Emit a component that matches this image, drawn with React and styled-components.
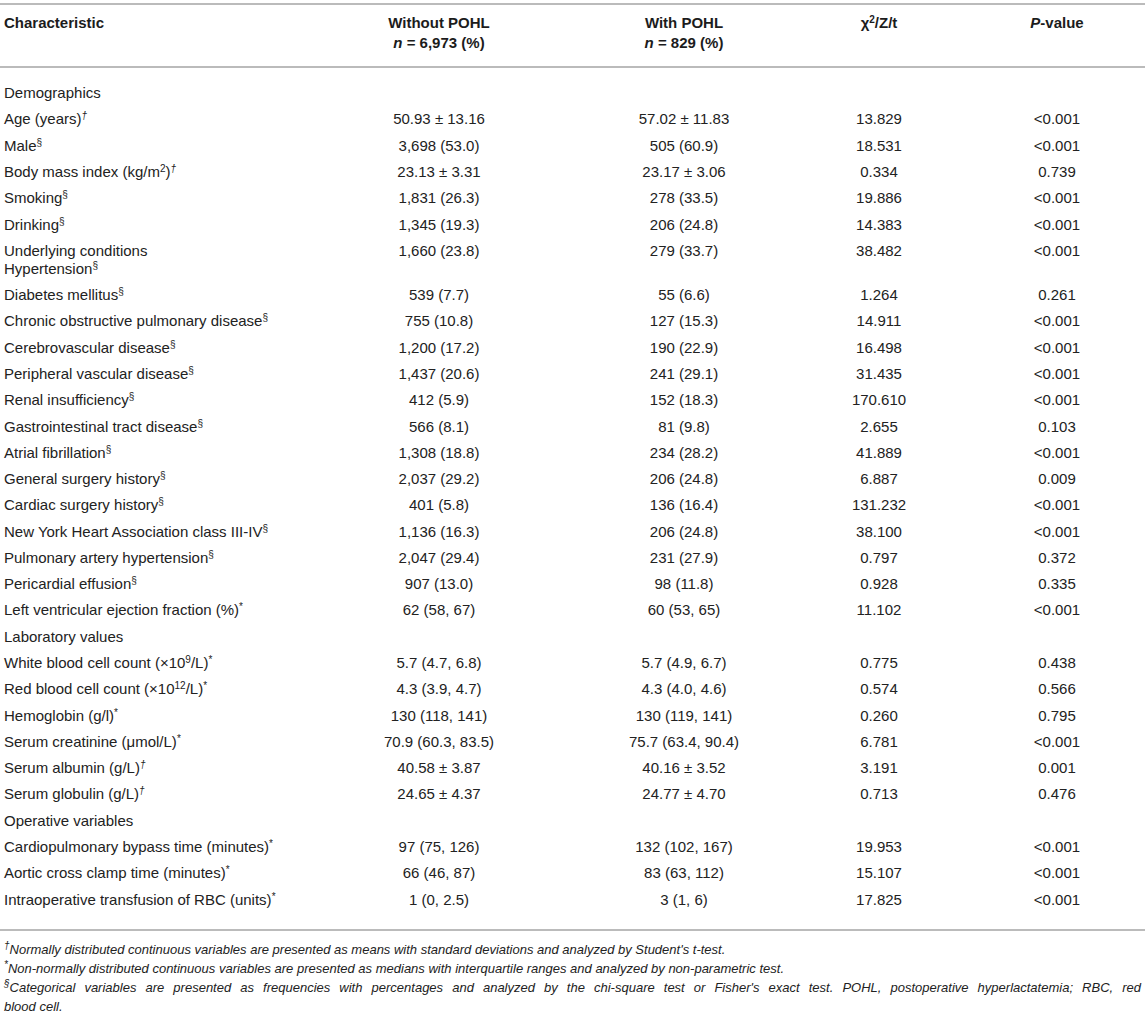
import React from "react";
import styled, { createGlobalStyle } from "styled-components";

const GlobalStyle = createGlobalStyle`
  body {
    margin: 0;
    background: #ffffff;
    font-family: "Liberation Sans", Arial, sans-serif;
    color: #222222;
  }
`;

// column widths chosen so each data column is centred where the table has it
const COLS = "299px 280px 210px 180px 176px";

const rows = [
  { section: "Demographics" },
  { label: "Age (years)", mark: "dagger", v: ["50.93 ± 13.16", "57.02 ± 11.83", "13.829", "<0.001"] },
  { label: "Male", mark: "sect", v: ["3,698 (53.0)", "505 (60.9)", "18.531", "<0.001"] },
  { label: <>Body mass index (kg/m<Sup>2</Sup>)</>, mark: "dagger", v: ["23.13 ± 3.31", "23.17 ± 3.06", "0.334", "0.739"] },
  { label: "Smoking", mark: "sect", v: ["1,831 (26.3)", "278 (33.5)", "19.886", "<0.001"] },
  { label: "Drinking", mark: "sect", v: ["1,345 (19.3)", "206 (24.8)", "14.383", "<0.001"] },
  { label: <>Underlying conditions<br />Hypertension</>, mark: "sect", v: ["1,660 (23.8)", "279 (33.7)", "38.482", "<0.001"] },
  { label: "Diabetes mellitus", mark: "sect", v: ["539 (7.7)", "55 (6.6)", "1.264", "0.261"] },
  { label: "Chronic obstructive pulmonary disease", mark: "sect", v: ["755 (10.8)", "127 (15.3)", "14.911", "<0.001"] },
  { label: "Cerebrovascular disease", mark: "sect", v: ["1,200 (17.2)", "190 (22.9)", "16.498", "<0.001"] },
  { label: "Peripheral vascular disease", mark: "sect", v: ["1,437 (20.6)", "241 (29.1)", "31.435", "<0.001"] },
  { label: "Renal insufficiency", mark: "sect", v: ["412 (5.9)", "152 (18.3)", "170.610", "<0.001"] },
  { label: "Gastrointestinal tract disease", mark: "sect", v: ["566 (8.1)", "81 (9.8)", "2.655", "0.103"] },
  { label: "Atrial fibrillation", mark: "sect", v: ["1,308 (18.8)", "234 (28.2)", "41.889", "<0.001"] },
  { label: "General surgery history", mark: "sect", v: ["2,037 (29.2)", "206 (24.8)", "6.887", "0.009"] },
  { label: "Cardiac surgery history", mark: "sect", v: ["401 (5.8)", "136 (16.4)", "131.232", "<0.001"] },
  { label: "New York Heart Association class III-IV", mark: "sect", v: ["1,136 (16.3)", "206 (24.8)", "38.100", "<0.001"] },
  { label: "Pulmonary artery hypertension", mark: "sect", v: ["2,047 (29.4)", "231 (27.9)", "0.797", "0.372"] },
  { label: "Pericardial effusion", mark: "sect", v: ["907 (13.0)", "98 (11.8)", "0.928", "0.335"] },
  { label: "Left ventricular ejection fraction (%)", mark: "star", v: ["62 (58, 67)", "60 (53, 65)", "11.102", "<0.001"] },
  { section: "Laboratory values" },
  { label: <>White blood cell count (×10<Sup>9</Sup>/L)</>, mark: "star", v: ["5.7 (4.7, 6.8)", "5.7 (4.9, 6.7)", "0.775", "0.438"] },
  { label: <>Red blood cell count (×10<Sup>12</Sup>/L)</>, mark: "star", v: ["4.3 (3.9, 4.7)", "4.3 (4.0, 4.6)", "0.574", "0.566"] },
  { label: "Hemoglobin (g/l)", mark: "star", v: ["130 (118, 141)", "130 (119, 141)", "0.260", "0.795"] },
  { label: "Serum creatinine (μmol/L)", mark: "star", v: ["70.9 (60.3, 83.5)", "75.7 (63.4, 90.4)", "6.781", "<0.001"] },
  { label: "Serum albumin (g/L)", mark: "dagger", v: ["40.58 ± 3.87", "40.16 ± 3.52", "3.191", "0.001"] },
  { label: "Serum globulin (g/L)", mark: "dagger", v: ["24.65 ± 4.37", "24.77 ± 4.70", "0.713", "0.476"] },
  { section: "Operative variables" },
  { label: "Cardiopulmonary bypass time (minutes)", mark: "star", v: ["97 (75, 126)", "132 (102, 167)", "19.953", "<0.001"] },
  { label: "Aortic cross clamp time (minutes)", mark: "star", v: ["66 (46, 87)", "83 (63, 112)", "15.107", "<0.001"] },
  { label: "Intraoperative transfusion of RBC (units)", mark: "star", v: ["1 (0, 2.5)", "3 (1, 6)", "17.825", "<0.001"] },
];

function Sup({ children }) {
  return <SupText>{children}</SupText>;
}

function Mark({ type }) {
  if (type === "dagger") return <SupText $italic>†</SupText>;
  if (type === "sect") return <SupText>§</SupText>;
  return <SupText>*</SupText>;
}

export default function App() {
  return (
    <Page>
      <GlobalStyle />
      <Table>
        <HeadRow>
          <HeadCell $align="left">Characteristic</HeadCell>
          <HeadCell>
            Without POHL
            <br />
            <i>n</i> = 6,973 (%)
          </HeadCell>
          <HeadCell>
            With POHL
            <br />
            <i>n</i> = 829 (%)
          </HeadCell>
          <HeadCell>
            χ<SupText>2</SupText>/Z/t
          </HeadCell>
          <HeadCell>
            <i>P</i>-value
          </HeadCell>
        </HeadRow>
        <Body>
          {rows.map((r, i) =>
            r.section ? (
              <Row key={i}>
                <Cell $align="left">{r.section}</Cell>
              </Row>
            ) : (
              <Row key={i}>
                <Cell $align="left">
                  {r.label}
                  <Mark type={r.mark} />
                </Cell>
                {r.v.map((val, j) => (
                  <Cell key={j}>{val}</Cell>
                ))}
              </Row>
            )
          )}
        </Body>
      </Table>
      <Notes>
        <Note>
          <SupText $italic>†</SupText>Normally distributed continuous variables are presented as means with standard deviations and analyzed by Student's t-test.
        </Note>
        <Note>
          <SupText>*</SupText>Non-normally distributed continuous variables are presented as medians with interquartile ranges and analyzed by non-parametric test.
        </Note>
        <Note>
          <JustifiedLine>
            <SupText>§</SupText>Categorical variables are presented as frequencies with percentages and analyzed by the chi-square test or Fisher's exact test. POHL, postoperative hyperlactatemia; RBC, red
          </JustifiedLine>
          blood cell.
        </Note>
      </Notes>
    </Page>
  );
}

const Page = styled.div`
  width: 1145px;
  padding-top: 3px;
`;

const Table = styled.div`
  border-top: 2px solid #bbbbbb;
  border-bottom: 2px solid #bbbbbb;
  font-size: 15px;
`;

const HeadRow = styled.div`
  display: grid;
  grid-template-columns: ${COLS};
  padding: 8px 0 13px;
  border-bottom: 2px solid #bbbbbb;
`;

const HeadCell = styled.div`
  padding: 0 4px;
  font-weight: bold;
  line-height: 20px;
  text-align: ${(p) => p.$align || "center"};
  color: #1c1c1c;
`;

const Body = styled.div`
  padding: 12px 0 16px;
`;

const Row = styled.div`
  display: grid;
  grid-template-columns: ${COLS};
  align-items: start;
  padding: 4.15px 0;
`;

const Cell = styled.div`
  padding: 0 4px;
  line-height: 18px;
  white-space: nowrap;
  text-align: ${(p) => p.$align || "center"};
`;

const SupText = styled.sup`
  font-size: 10px;
  line-height: 0;
  vertical-align: 0.5em;
  font-style: ${(p) => (p.$italic ? "italic" : "inherit")};
`;

const Notes = styled.div`
  padding: 9px 4px 0;
`;

const Note = styled.div`
  font-size: 13px;
  font-style: italic;
  line-height: 19px;
`;

const JustifiedLine = styled.span`
  display: block;
  text-align: justify;
  text-align-last: justify;
`;
